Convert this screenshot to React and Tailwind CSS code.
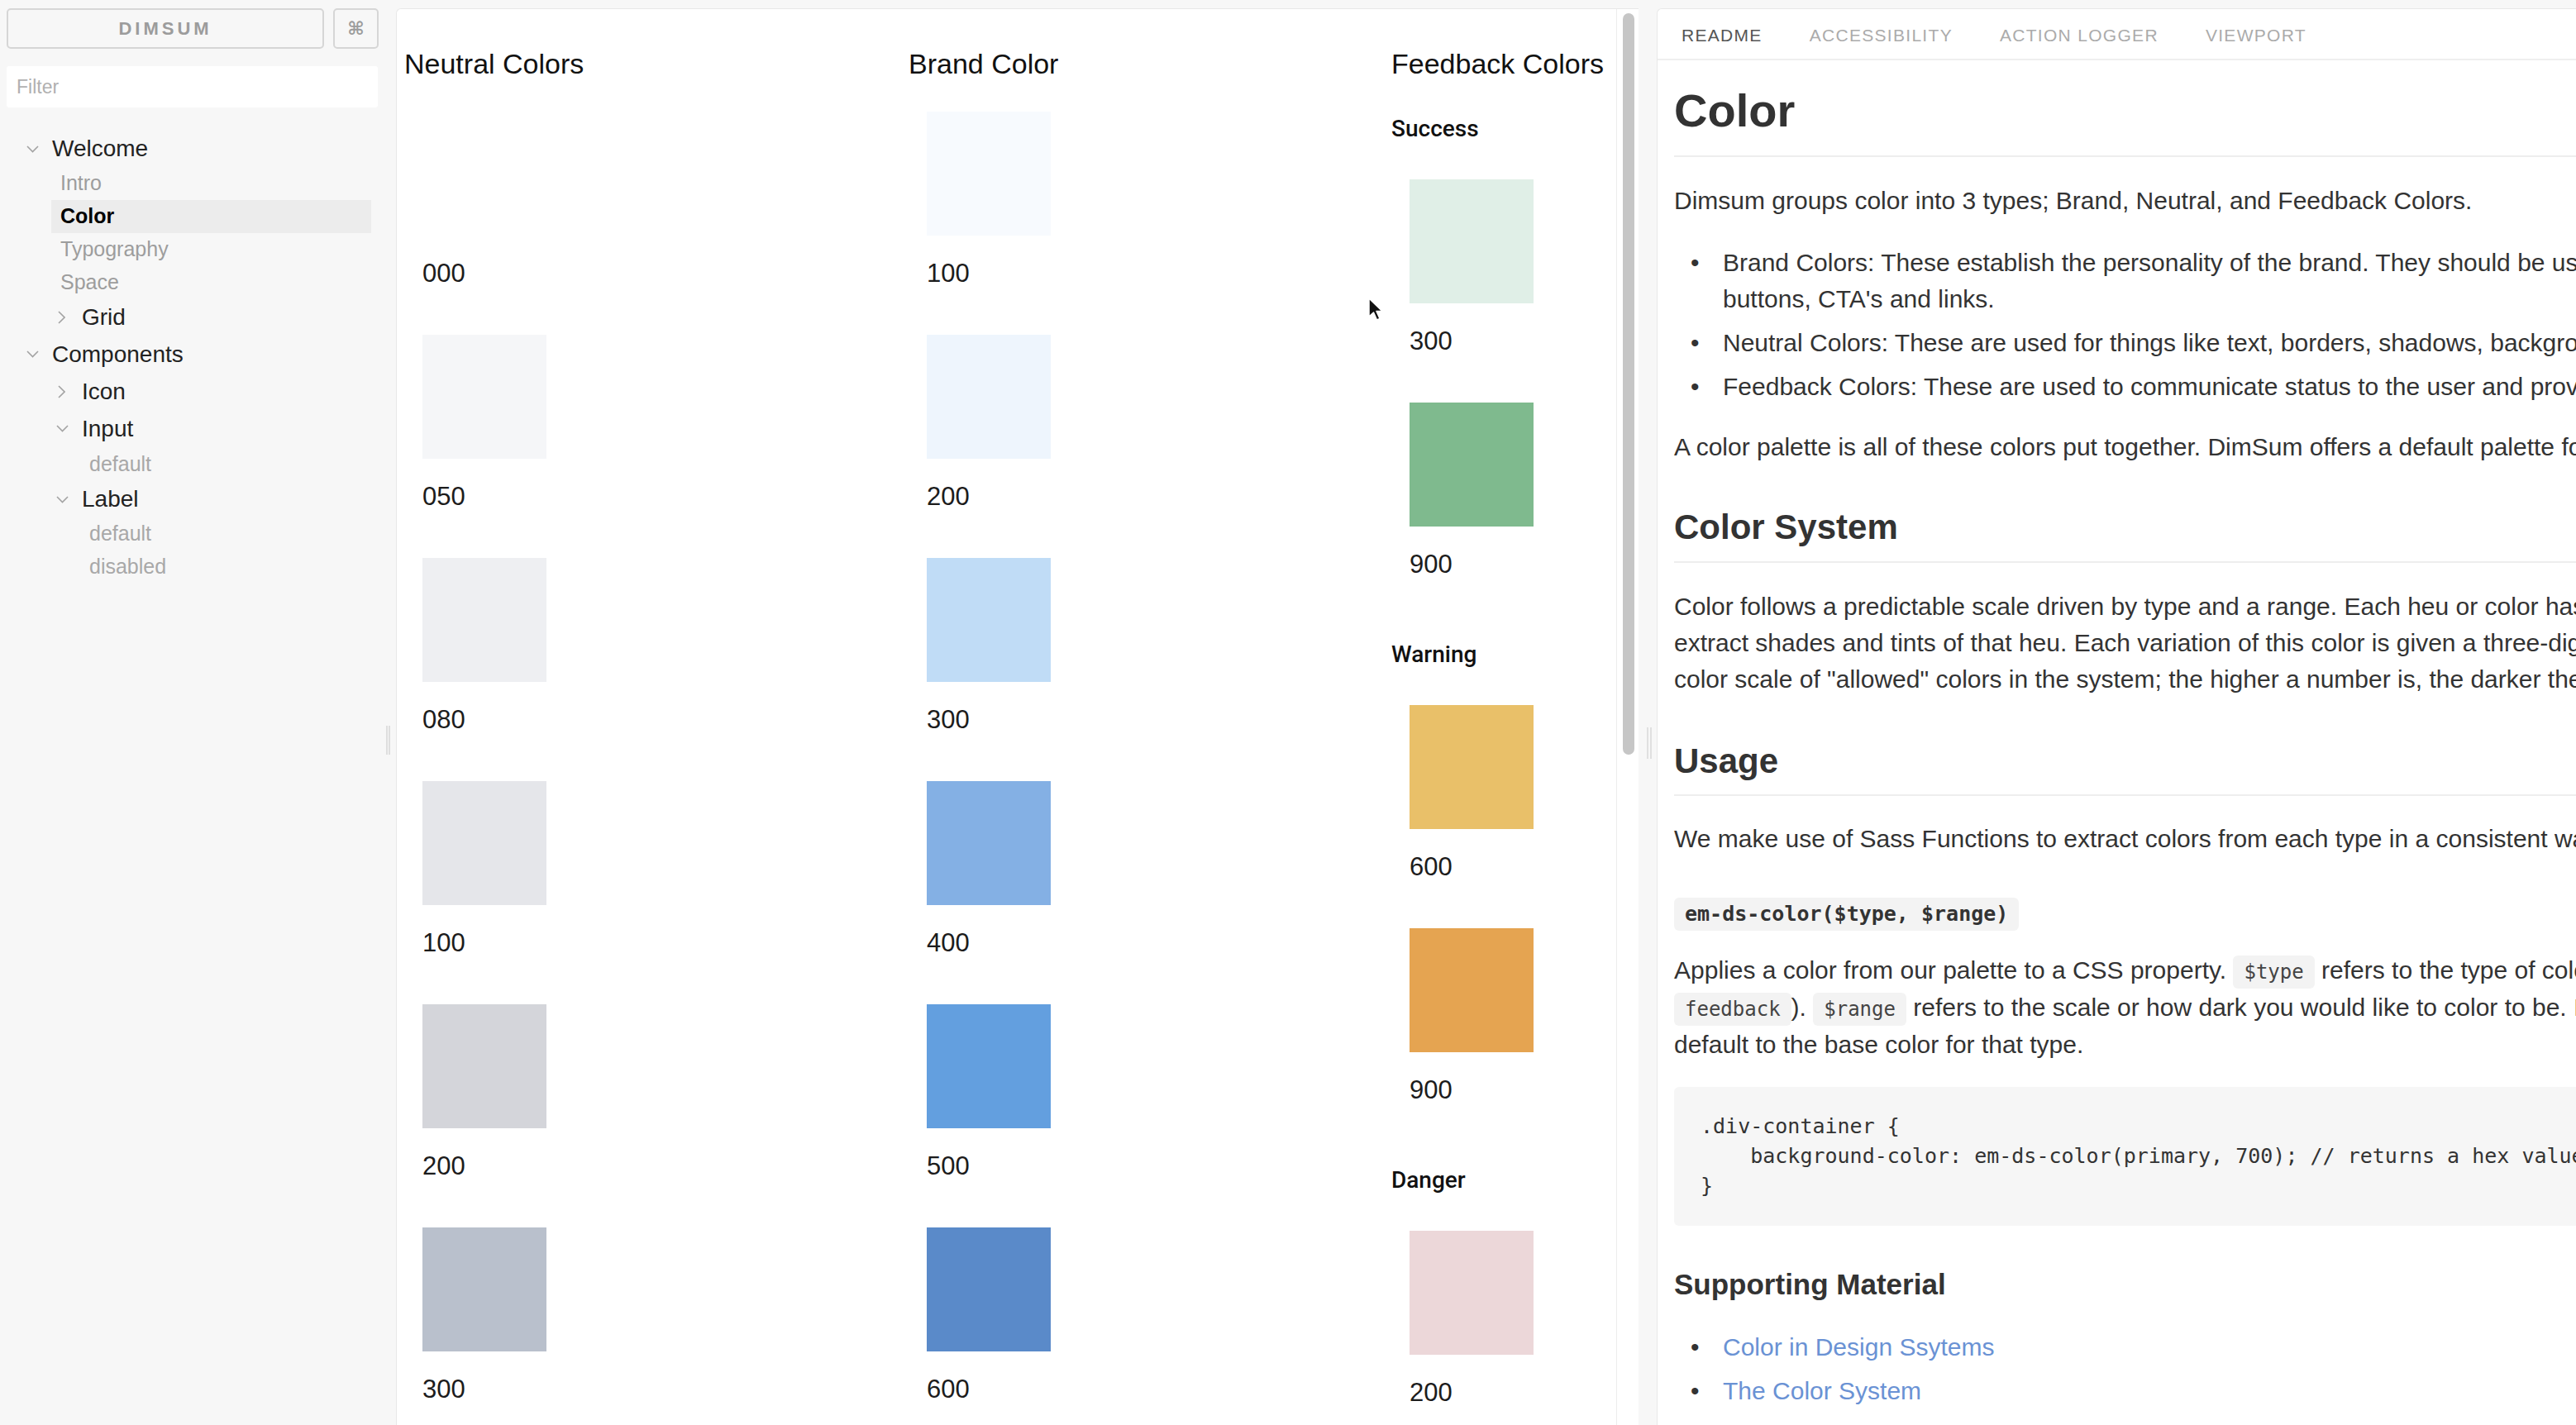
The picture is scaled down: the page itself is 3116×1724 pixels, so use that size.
import React from "react";

const neutral = [
  { label: "000", cls: "bg-white" },
  { label: "050", cls: "bg-[#f5f6f8]" },
  { label: "080", cls: "bg-[#eeeff2]" },
  { label: "100", cls: "bg-[#e5e6ea]" },
  { label: "200", cls: "bg-[#d4d5da]" },
  { label: "300", cls: "bg-[#b9c0cc]" },
];

const brand = [
  { label: "100", cls: "bg-[#f7fafe]" },
  { label: "200", cls: "bg-[#eef5fd]" },
  { label: "300", cls: "bg-[#c0dcf6]" },
  { label: "400", cls: "bg-[#84b0e4]" },
  { label: "500", cls: "bg-[#639fdf]" },
  { label: "600", cls: "bg-[#5a8ac9]" },
];

const feedback = [
  {
    name: "Success",
    first: true,
    items: [
      { label: "300", cls: "bg-[#e0efe7]" },
      { label: "900", cls: "bg-[#7fba8e]" },
    ],
  },
  {
    name: "Warning",
    items: [
      { label: "600", cls: "bg-[#e9c069]" },
      { label: "900", cls: "bg-[#e5a451]" },
    ],
  },
  {
    name: "Danger",
    items: [{ label: "200", cls: "bg-[#ecd7d9]" }],
  },
];

function Swatch({ label, cls }) {
  return (
    <div className="pl-[22px] mb-[54px]">
      <div className={"w-[150px] h-[150px] " + cls} />
      <div className="mt-[26px] text-[31px] leading-[40px] text-[#1c1c1c]">{label}</div>
    </div>
  );
}

function ChevronDown() {
  return (
    <svg width="15" height="9" viewBox="0 0 15 9">
      <path d="M1 1 L7.5 7.5 L14 1" fill="none" stroke="#a3a3a3" strokeWidth="1.6" />
    </svg>
  );
}

function ChevronRight() {
  return (
    <svg width="9" height="16" viewBox="0 0 9 16">
      <path d="M1 1 L8 8 L1 15" fill="none" stroke="#a3a3a3" strokeWidth="1.6" />
    </svg>
  );
}

function Code({ children, bold }) {
  return (
    <span
      className={
        "inline-block rounded-[6px] bg-[#f3f3f3] px-[13px] leading-[40px] font-['DejaVu_Sans_Mono',monospace] " +
        (bold ? "text-[25px] font-bold text-[#333]" : "text-[24px] text-[#444]")
      }
    >
      {children}
    </span>
  );
}

function Bullet({ children, className }) {
  return (
    <li className={"flex pl-[20px] " + (className || "")}>
      <span className="w-[39px] shrink-0">•</span>
      <span>{children}</span>
    </li>
  );
}

export default function App() {
  return (
    <div className="relative flex w-[3116px] h-[1724px] overflow-hidden bg-[#f7f7f7] font-['Liberation_Sans',Arial,sans-serif]">
      {/* Sidebar */}
      <aside className="w-[464px] shrink-0 pt-[10px]">
        <div className="flex pl-[8px] gap-[11px] h-[49px]">
          <div className="w-[384px] h-full border-2 border-[#d6d6d6] rounded-[5px] flex items-center justify-center text-[22px] font-bold tracking-[4px] text-[#9c9c9c]">
            DIMSUM
          </div>
          <div className="w-[55px] h-full border-2 border-[#d6d6d6] rounded-[5px] flex items-center justify-center text-[22px] font-bold text-[#9c9c9c] font-['DejaVu_Sans',sans-serif]">
            ⌘
          </div>
        </div>
        <div className="ml-[8px] mt-[21px] w-[449px] h-[50px] bg-white rounded-[3px] flex items-center pl-[12px] text-[23px] text-[#b0b0b0]">
          Filter
        </div>
        <nav className="mt-[28px] text-[28px] text-[#222]">
          <div className="h-[44px] flex items-center pl-[32px]">
            <span className="w-[31px] flex items-center"><ChevronDown /></span>
            <span>Welcome</span>
          </div>
          <div className="h-[40px] ml-[62px] w-[387px] pl-[11px] flex items-center text-[25px] text-[#9d9d9d]">Intro</div>
          <div className="h-[40px] ml-[62px] w-[387px] pl-[11px] flex items-center text-[25px] font-bold text-black bg-[#ececec]">Color</div>
          <div className="h-[40px] ml-[62px] w-[387px] pl-[11px] flex items-center text-[25px] text-[#9d9d9d]">Typography</div>
          <div className="h-[40px] ml-[62px] w-[387px] pl-[11px] flex items-center text-[25px] text-[#9d9d9d]">Space</div>
          <div className="h-[44px] flex items-center pl-[70px]">
            <span className="w-[29px] flex items-center"><ChevronRight /></span>
            <span>Grid</span>
          </div>
          <div className="h-[45px] flex items-center pl-[32px]">
            <span className="w-[31px] flex items-center"><ChevronDown /></span>
            <span>Components</span>
          </div>
          <div className="h-[45px] flex items-center pl-[70px]">
            <span className="w-[29px] flex items-center"><ChevronRight /></span>
            <span>Icon</span>
          </div>
          <div className="h-[45px] flex items-center pl-[68px]">
            <span className="w-[31px] flex items-center"><ChevronDown /></span>
            <span>Input</span>
          </div>
          <div className="h-[41px] pl-[108px] flex items-center text-[25px] text-[#a8a8a8]">default</div>
          <div className="h-[44px] flex items-center pl-[68px]">
            <span className="w-[31px] flex items-center"><ChevronDown /></span>
            <span>Label</span>
          </div>
          <div className="h-[40px] pl-[108px] flex items-center text-[25px] text-[#a8a8a8]">default</div>
          <div className="h-[40px] pl-[108px] flex items-center text-[25px] text-[#a8a8a8]">disabled</div>
        </nav>
      </aside>

      {/* sidebar resize handle */}
      <div className="w-[15px] shrink-0 pt-[878px] pl-[3px]">
        <div className="w-[5px] h-[35px] border-x-2 border-[#dedede]" />
      </div>

      {/* Main canvas */}
      <main className="mt-[10px] w-[1503px] shrink-0 flex bg-white rounded-tl-[6px] border-l border-t border-[#e8e8e8] overflow-hidden">
        <div className="flex-1 flex pl-[9px] pt-[44px] min-w-0">
          <section className="w-[610px] shrink-0">
            <h2 className="text-[34px] leading-[44px] text-[#111]">Neutral Colors</h2>
            <div className="mt-[36px]">
              {neutral.map((s) => (
                <Swatch key={s.label} {...s} />
              ))}
            </div>
          </section>
          <section className="w-[584px] shrink-0">
            <h2 className="text-[34px] leading-[44px] text-[#111]">Brand Color</h2>
            <div className="mt-[36px]">
              {brand.map((s) => (
                <Swatch key={s.label} {...s} />
              ))}
            </div>
          </section>
          <section className="flex-1 min-w-0 flex flex-col">
            <h2 className="text-[34px] leading-[44px] text-[#111] whitespace-nowrap">Feedback Colors</h2>
            {feedback.map((g) => (
              <div key={g.name} className={g.first ? "mt-[37px]" : "mt-[15px]"}>
                <h3 className="text-[28px] leading-[40px] font-medium text-[#111] font-['Roboto',sans-serif]">{g.name}</h3>
                <div className="mt-[41px]">
                  {g.items.map((s) => (
                    <Swatch key={s.label} {...s} />
                  ))}
                </div>
              </div>
            ))}
          </section>
        </div>
        <div className="w-[27px] shrink-0 border-l border-[#ececec] pt-[5px] pl-[7px]">
          <div className="w-[14px] h-[897px] rounded-full bg-[#c6c6c6]" />
        </div>
      </main>

      {/* panel resize handle */}
      <div className="w-[22px] shrink-0 pt-[880px] pl-[10px]">
        <div className="w-[6px] h-[38px] border-x-2 border-[#e0e0e0]" />
      </div>

      {/* Addon panel */}
      <section className="flex-1 min-w-0 mt-[10px] bg-white rounded-tl-[6px] border-l border-t border-[#e8e8e8] overflow-hidden">
        <div className="h-[62px] pt-[3px] border-b-2 border-[#efefef] flex items-center pl-[29px] gap-[57px] text-[21px] tracking-[1.3px] uppercase whitespace-nowrap">
          <span className="text-[#555]">Readme</span>
          <span className="text-[#ababab]">Accessibility</span>
          <span className="text-[#ababab]">Action Logger</span>
          <span className="text-[#ababab]">Viewport</span>
        </div>
        <div className="w-[1500px] px-[20px] text-[30px] leading-[44px] text-[#333] whitespace-nowrap">
          <h1 className="mt-[26px] text-[56px] leading-[70px] font-semibold pb-[19px] border-b-2 border-[#eeeeee]">Color</h1>
          <p className="mt-[31px]">Dimsum groups color into 3 types; Brand, Neutral, and Feedback Colors.</p>
          <ul className="mt-[31px]">
            <Bullet>
              Brand Colors: These establish the personality of the brand. They should be used for primary actions like
              <br />
              buttons, CTA's and links.
            </Bullet>
            <Bullet className="mt-[9px]">
              Neutral Colors: These are used for things like text, borders, shadows, backgrounds, and dividers.
            </Bullet>
            <Bullet className="mt-[9px]">
              Feedback Colors: These are used to communicate status to the user and provide feedback.
            </Bullet>
          </ul>
          <p className="mt-[29px]">A color palette is all of these colors put together. DimSum offers a default palette for use.</p>

          <h2 className="mt-[49px] text-[42px] leading-[52px] font-semibold pb-[15px] border-b-2 border-[#eeeeee]">Color System</h2>
          <p className="mt-[31px]">
            Color follows a predictable scale driven by type and a range. Each heu or color has a base that we use to
            <br />
            extract shades and tints of that heu. Each variation of this color is given a three-digit number representing
            <br />
            color scale of "allowed" colors in the system; the higher a number is, the darker the color.
          </p>

          <h2 className="mt-[51px] text-[42px] leading-[52px] font-semibold pb-[14px] border-b-2 border-[#eeeeee]">Usage</h2>
          <p className="mt-[30px]">We make use of Sass Functions to extract colors from each type in a consistent way.</p>
          <p className="mt-[45px]">
            <Code bold>em-ds-color($type, $range)</Code>
          </p>
          <p className="mt-[25px] leading-[45px]">
            Applies a color from our palette to a CSS property. <Code>$type</Code> refers to the type of color (brand, neutral, or
            <br />
            <Code>feedback</Code>). <Code>$range</Code> refers to the scale or how dark you would like to color to be. If omitted, it will
            <br />
            default to the base color for that type.
          </p>
          <pre className="mt-[29px] bg-[#f6f6f6] rounded-[6px] py-[30px] px-[32px] text-[25px] leading-[36px] text-[#333] font-['DejaVu_Sans_Mono',monospace]">
{`.div-container {
    background-color: em-ds-color(primary, 700); // returns a hex value
}`}
          </pre>
          <h3 className="mt-[49px] text-[35px] leading-[44px] font-semibold">Supporting Material</h3>
          <ul className="mt-[32px]">
            <Bullet>
              <a className="text-[#6a92d4]">Color in Design Ssytems</a>
            </Bullet>
            <Bullet className="mt-[9px]">
              <a className="text-[#6a92d4]">The Color System</a>
            </Bullet>
          </ul>
        </div>
      </section>

      {/* mouse cursor */}
      <svg className="absolute left-[1655px] top-[360px]" width="20" height="30" viewBox="0 0 20 30">
        <path d="M1 1 L1 23 L6.5 18 L10.5 27 L14 25.5 L10 16.5 L17 16.5 Z" fill="#111" stroke="#fff" strokeWidth="1.5" strokeLinejoin="round" />
      </svg>
    </div>
  );
}
